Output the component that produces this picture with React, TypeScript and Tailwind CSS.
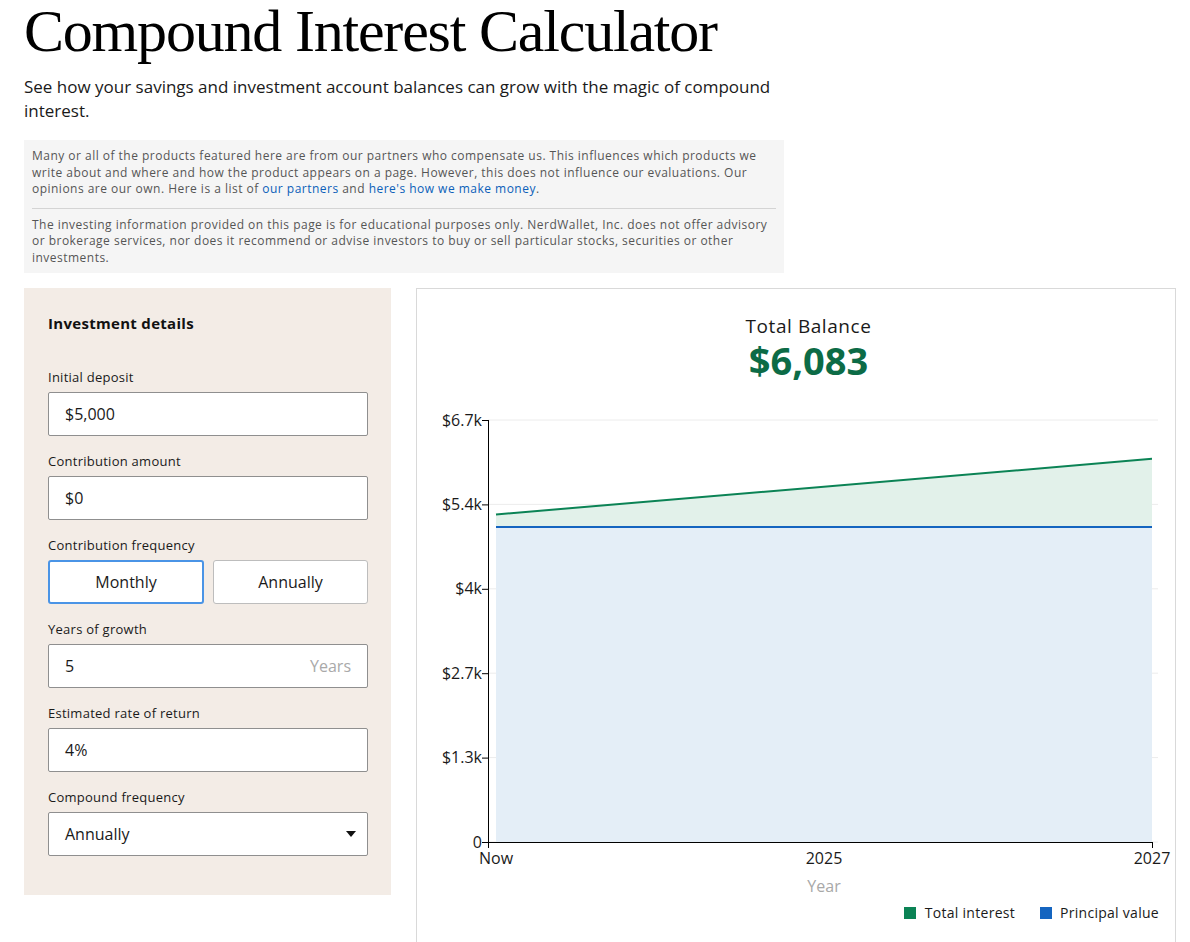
import React from 'react'

const BODY = { fontFamily: '"Open Sans", Lato, Arial, sans-serif' }

// chart geometry (svg coordinates)
const AX_X = 71
const TOP = 20
const BOTTOM = 442
const X0 = 79
const X1 = 735
const MAX = 6700

const yOf = (v: number) => BOTTOM - (v / MAX) * (BOTTOM - TOP)

const TICKS = [
  { v: 6700, label: '$6.7k' },
  { v: 5360, label: '$5.4k' },
  { v: 4020, label: '$4k' },
  { v: 2680, label: '$2.7k' },
  { v: 1340, label: '$1.3k' },
  { v: 0, label: '0' },
]

function Field({
  label,
  children,
}: {
  label: string
  children: React.ReactNode
}) {
  return (
    <div className="mb-4">
      <div className="text-[13px] leading-[18px] tracking-[0.02em] text-[#1a1a1a] mb-[6px]">{label}</div>
      {children}
    </div>
  )
}

function TextBox({ value, suffix }: { value: string; suffix?: string }) {
  return (
    <div className="h-[44px] w-[320px] bg-white border border-[#8f8f8f] rounded-[2px] flex items-center justify-between pl-4 pr-4 text-[16px] text-[#1a1a1a]">
      <span>{value}</span>
      {suffix && <span className="text-[#a9a9a9]">{suffix}</span>}
    </div>
  )
}

function Chart() {
  const pStart = 5200
  const pEnd = 6083
  const principalY = yOf(5000)
  return (
    <svg width={758} height={500} className="block" style={{ fontFamily: '"Open Sans", Arial, sans-serif' }}>
      {/* grid */}
      {TICKS.map((t) => (
        <line key={t.label} x1={AX_X} x2={741} y1={yOf(t.v)} y2={yOf(t.v)} stroke="#ececec" strokeWidth={1} />
      ))}
      {/* interest area */}
      <polygon
        points={`${X0},${yOf(pStart)} ${X1},${yOf(pEnd)} ${X1},${principalY} ${X0},${principalY}`}
        fill="#e2f1ea"
      />
      {/* principal area */}
      <rect x={X0} y={principalY} width={X1 - X0} height={BOTTOM - principalY} fill="#e4eef7" />
      <line x1={X0} x2={X1} y1={principalY} y2={principalY} stroke="#1565c0" strokeWidth={2} />
      <line x1={X0} x2={X1} y1={yOf(pStart)} y2={yOf(pEnd)} stroke="#0b8355" strokeWidth={2} />
      {/* axes */}
      <line x1={AX_X + 0.5} x2={AX_X + 0.5} y1={TOP} y2={BOTTOM + 6} stroke="#000" strokeWidth={1} />
      <line x1={AX_X} x2={X1} y1={BOTTOM + 0.5} y2={BOTTOM + 0.5} stroke="#000" strokeWidth={1} />
      <line x1={X1 + 0.5} x2={X1 + 0.5} y1={BOTTOM} y2={BOTTOM + 6} stroke="#000" strokeWidth={1} />
      {TICKS.map((t) => (
        <g key={'l' + t.label}>
          <line x1={AX_X - 6} x2={AX_X} y1={yOf(t.v) + 0.5} y2={yOf(t.v) + 0.5} stroke="#000" strokeWidth={1} />
          <text x={AX_X - 6} y={yOf(t.v) + 5.5} textAnchor="end" fontSize={16} fill="#1a1a1a">
            {t.label}
          </text>
        </g>
      ))}
      <text x={X0} y={464} textAnchor="middle" fontSize={16} fill="#1a1a1a">Now</text>
      <text x={407} y={464} textAnchor="middle" fontSize={16} fill="#1a1a1a">2025</text>
      <text x={X1} y={464} textAnchor="middle" fontSize={16} fill="#1a1a1a">2027</text>
      <text x={407} y={492} textAnchor="middle" fontSize={16} fill="#a8a8a8">Year</text>
    </svg>
  )
}

export default function App() {
  return (
    <div className="bg-white min-h-[942px] pl-6 pr-[14px] overflow-hidden" style={BODY}>
      {/* ヘッダー */}
      <h1
        className="-mt-[1px] text-[60px] leading-[64px] text-black tracking-[-0.02em]"
        style={{ fontFamily: '"Liberation Serif", "Times New Roman", serif' }}
      >
        Compound Interest Calculator
      </h1>
      <p className="mt-[12px] w-[760px] text-[17px] leading-[24px] text-[#1a1a1a]">
        See how your savings and investment account balances can grow with the magic of compound interest.
      </p>

      {/* 注意書き */}
      <div className="mt-[17px] w-[760px] bg-[#f5f5f5] px-2 pt-[8px] pb-[7px] text-[12px] leading-[16.5px] tracking-[0.04em] text-[#555] whitespace-nowrap">
        <p className="pb-[10px] border-b border-[#d4d4d4]">
          Many or all of the products featured here are from our partners who compensate us. This influences which
          products we
          <br />
          write about and where and how the product appears on a page. However, this does not influence our
          evaluations. Our
          <br />
          opinions are our own. Here is a list of <span className="text-[#0b5fb9]">our partners</span> and{' '}
          <span className="text-[#0b5fb9]">here's how we make money</span>.
        </p>
        <p className="pt-[8px]">
          The investing information provided on this page is for educational purposes only. NerdWallet, Inc. does not
          offer advisory
          <br />
          or brokerage services, nor does it recommend or advise investors to buy or sell particular stocks, securities
          or other
          <br />
          investments.
        </p>
      </div>

      <div className="mt-[15px] flex items-start gap-[25px]">
        {/* 入力パネル */}
        <div className="w-[367px] bg-[#f3ece6] px-6 pt-[25px] pb-[23px]">
          <div className="text-[15px] leading-[20px] font-bold tracking-[0.02em] text-[#111] mb-[35px]">
            Investment details
          </div>
          <Field label="Initial deposit">
            <TextBox value="$5,000" />
          </Field>
          <Field label="Contribution amount">
            <TextBox value="$0" />
          </Field>
          <Field label="Contribution frequency">
            <div className="flex gap-[9px] w-[320px]">
              <button className="h-[44px] w-[156px] bg-white border-2 border-[#4a94e6] rounded-[3px] text-[16px] text-[#1a1a1a]">
                Monthly
              </button>
              <button className="h-[44px] w-[155px] bg-white border border-[#bdbdbd] rounded-[3px] text-[16px] text-[#1a1a1a]">
                Annually
              </button>
            </div>
          </Field>
          <Field label="Years of growth">
            <TextBox value="5" suffix="Years" />
          </Field>
          <Field label="Estimated rate of return">
            <TextBox value="4%" />
          </Field>
          <Field label="Compound frequency">
            <div className="h-[44px] w-[320px] bg-white border border-[#8f8f8f] rounded-[2px] flex items-center justify-between pl-4 pr-[11px] text-[16px] text-[#1a1a1a]">
              <span>Annually</span>
              <svg width="10" height="6" viewBox="0 0 10 6">
                <path d="M0 0h10L5 6z" fill="#111" />
              </svg>
            </div>
          </Field>
        </div>

        {/* チャートパネル */}
        <div className="w-[760px] min-h-[680px] border border-[#d9d9d9] pt-[25px]">
          <div className="pl-[25px] text-center">
            <div className="text-[19px] leading-[24px] tracking-[0.03em] text-[#1a1a1a]">Total Balance</div>
            <div className="mt-[2px] text-[38px] leading-[40px] font-bold text-[#0c6b46]">$6,083</div>
          </div>
          <div className="mt-[20px]">
            <Chart />
          </div>
          <div className="flex justify-end items-center gap-[25px] pr-[16px] mt-[2px] text-[14px] tracking-[0.02em] text-[#1a1a1a]">
            <div className="flex items-center gap-[9px]">
              <span className="w-[12px] h-[12px] bg-[#0b8355]" />
              Total interest
            </div>
            <div className="flex items-center gap-[8px]">
              <span className="w-[12px] h-[12px] bg-[#1565c0]" />
              Principal value
            </div>
          </div>
        </div>
      </div>
    </div>
  )
}
